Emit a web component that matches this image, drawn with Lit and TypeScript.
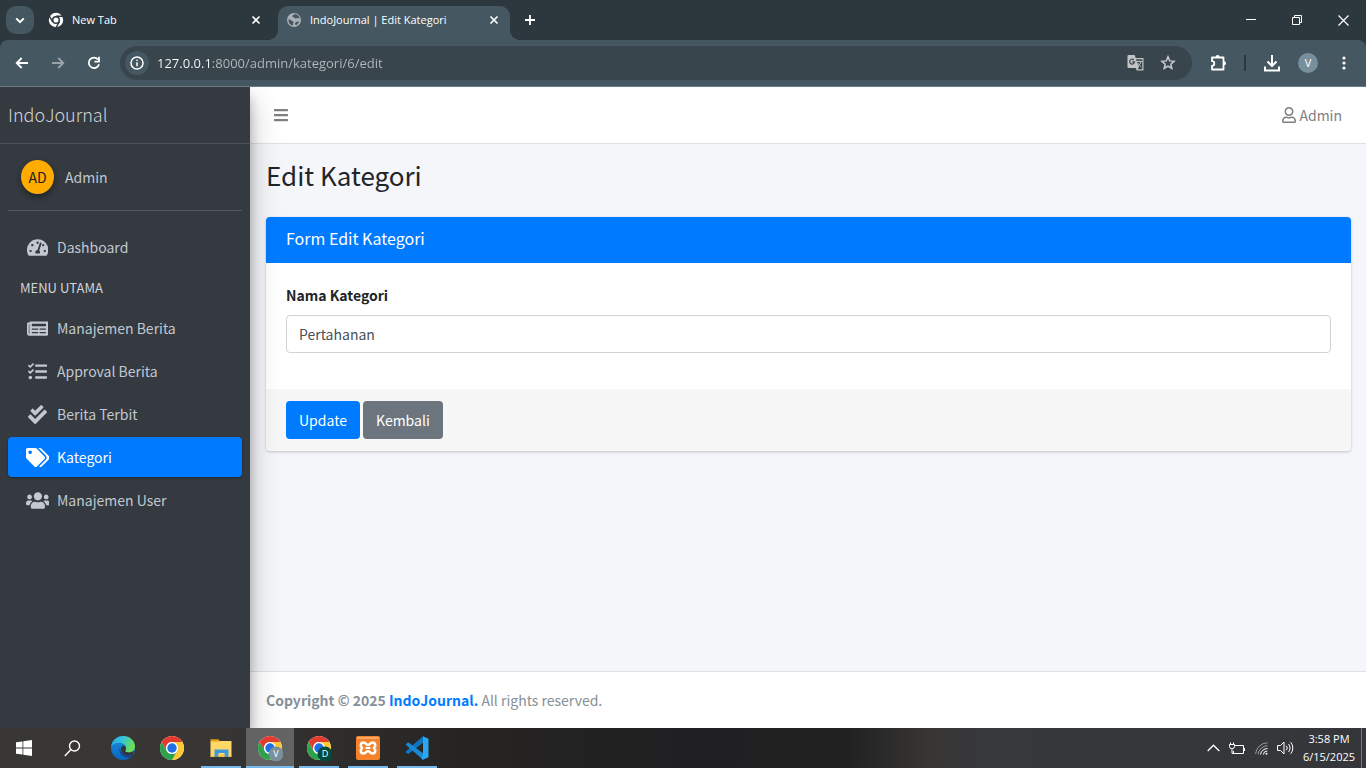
import { LitElement, html, svg, css } from "lit";
import { customElement } from "lit/decorators.js";
import { classMap } from "lit/directives/class-map.js";

const reset = css`
  * {
    box-sizing: border-box;
  }
  button {
    border: 0;
    padding: 0;
    margin: 0;
    background: none;
    color: inherit;
    font: inherit;
    cursor: pointer;
  }
  a {
    color: inherit;
    text-decoration: none;
  }
  svg {
    display: block;
    flex: none;
  }
`;

type Glyph = { w: number; d: string };

const glyphs: Record<string, Glyph> = {
  dashboard: {
    w: 576,
    d: "M288 32C128.94 32 0 160.94 0 320c0 52.8 14.25 102.26 39.06 144.8 5.61 9.62 16.3 15.2 27.44 15.2h443c11.14 0 21.83-5.58 27.44-15.2C561.75 422.26 576 372.8 576 320c0-159.06-128.94-288-288-288zm0 64c14.71 0 26.58 10.13 30.32 23.65-1.11 2.26-2.64 4.23-3.45 6.67l-9.22 27.67c-5.13 3.49-10.97 6.01-17.64 6.01-17.67 0-32-14.33-32-32S270.33 96 288 96zM96 384c-17.67 0-32-14.33-32-32s14.33-32 32-32 32 14.33 32 32-14.33 32-32 32zm48-160c-17.67 0-32-14.33-32-32s14.33-32 32-32 32 14.33 32 32-14.33 32-32 32zm246.77-72.41l-61.33 184C343.13 347.33 352 364.54 352 384c0 11.72-3.38 22.55-8.88 32H232.88c-5.5-9.45-8.88-20.28-8.88-32 0-33.94 26.5-61.43 59.9-63.59l61.34-184.01c4.17-12.56 17.73-19.45 30.36-15.17 12.57 4.19 19.35 17.79 15.17 30.36zm14.66 57.2l15.52-46.55c3.47-1.29 7.13-2.23 11.05-2.23 17.67 0 32 14.33 32 32s-14.33 32-32 32c-11.38-.01-20.89-6.28-26.57-15.22zM480 384c-17.67 0-32-14.33-32-32s14.33-32 32-32 32 14.33 32 32-14.33 32-32 32z",
  },
  news: {
    w: 576,
    d: "M552 64H88c-13.255 0-24 10.745-24 24v8H24c-13.255 0-24 10.745-24 24v272c0 30.928 25.072 56 56 56h472c26.51 0 48-21.49 48-48V88c0-13.255-10.745-24-24-24zM56 400a8 8 0 0 1-8-8V144h16v248a8 8 0 0 1-8 8zm236-16H140c-6.627 0-12-5.373-12-12v-8c0-6.627 5.373-12 12-12h152c6.627 0 12 5.373 12 12v8c0 6.627-5.373 12-12 12zm208 0H348c-6.627 0-12-5.373-12-12v-8c0-6.627 5.373-12 12-12h152c6.627 0 12 5.373 12 12v8c0 6.627-5.373 12-12 12zm-208-96H140c-6.627 0-12-5.373-12-12v-8c0-6.627 5.373-12 12-12h152c6.627 0 12 5.373 12 12v8c0 6.627-5.373 12-12 12zm208 0H348c-6.627 0-12-5.373-12-12v-8c0-6.627 5.373-12 12-12h152c6.627 0 12 5.373 12 12v8c0 6.627-5.373 12-12 12zm0-96H140c-6.627 0-12-5.373-12-12v-40c0-6.627 5.373-12 12-12h360c6.627 0 12 5.373 12 12v40c0 6.627-5.373 12-12 12z",
  },
  tasks: {
    w: 512,
    d: "M139.61 35.5a12 12 0 0 0-17 0L58.93 98.81l-22.7-22.12a12 12 0 0 0-17 0L3.53 92.41a12 12 0 0 0 0 17l47.59 47.4a12.78 12.78 0 0 0 17.61 0l15.59-15.62L156.52 69a12.09 12.09 0 0 0 .09-17zm0 159.19a12 12 0 0 0-17 0l-63.68 63.72-22.7-22.1a12 12 0 0 0-17 0L3.53 252a12 12 0 0 0 0 17L51 316.5a12.77 12.77 0 0 0 17.6 0l15.7-15.69 72.2-72.22a12 12 0 0 0 .09-16.9zM64 368c-26.49 0-48.59 21.5-48.59 48S37.53 464 64 464a48 48 0 0 0 0-96zm432 16H208a16 16 0 0 0-16 16v32a16 16 0 0 0 16 16h288a16 16 0 0 0 16-16v-32a16 16 0 0 0-16-16zm0-320H208a16 16 0 0 0-16 16v32a16 16 0 0 0 16 16h288a16 16 0 0 0 16-16V80a16 16 0 0 0-16-16zm0 160H208a16 16 0 0 0-16 16v32a16 16 0 0 0 16 16h288a16 16 0 0 0 16-16v-32a16 16 0 0 0-16-16z",
  },
  checks: {
    w: 512,
    d: "M505 174.8l-39.6-39.6c-9.4-9.4-24.6-9.4-33.9 0L192 374.7 80.6 263.2c-9.4-9.4-24.6-9.4-33.9 0L7 302.9c-9.4 9.4-9.4 24.6 0 34L175 505c9.4 9.4 24.6 9.4 33.9 0l296-296.2c9.4-9.5 9.4-24.7.1-34zm-324.3 106c6.2 6.3 16.4 6.3 22.6 0l208-208.2c6.2-6.3 6.2-16.4 0-22.6L366.1 4.7c-6.2-6.3-16.4-6.3-22.6 0L192 156.2l-55.4-55.5c-6.2-6.3-16.4-6.3-22.6 0L68.7 146c-6.2 6.3-6.2 16.4 0 22.6l112 112.2z",
  },
  tags: {
    w: 640,
    d: "M497.941 225.941L286.059 14.059A48 48 0 0 0 252.118 0H48C21.49 0 0 21.49 0 48v204.118a48 48 0 0 0 14.059 33.941l211.882 211.882c18.744 18.745 49.136 18.746 67.882 0l204.118-204.118c18.745-18.745 18.745-49.137 0-67.882zM112 160c-26.51 0-48-21.49-48-48s21.49-48 48-48 48 21.49 48 48-21.49 48-48 48zm513.941 133.823L421.823 497.941c-18.745 18.745-49.137 18.745-67.882 0l-.36-.36L527.64 323.522c16.999-16.999 26.36-39.6 26.36-63.64s-9.362-46.641-26.36-63.64L331.397 0h48.721a48 48 0 0 1 33.941 14.059l211.882 211.882c18.745 18.745 18.745 49.137 0 67.882z",
  },
  users: {
    w: 640,
    d: "M96 224c35.3 0 64-28.7 64-64s-28.7-64-64-64-64 28.7-64 64 28.7 64 64 64zm448 0c35.3 0 64-28.7 64-64s-28.7-64-64-64-64 28.7-64 64 28.7 64 64 64zm32 32h-64c-17.6 0-33.5 7.1-45.1 18.6 40.3 22.1 68.9 62 75.1 109.4h66c17.7 0 32-14.3 32-32v-32c0-35.3-28.7-64-64-64zm-256 0c61.9 0 112-50.1 112-112S381.9 32 320 32 208 82.1 208 144s50.1 112 112 112zm76.8 32h-8.3c-20.8 10-43.9 16-68.5 16s-47.6-6-68.5-16h-8.3C179.6 288 128 339.6 128 403.2V432c0 26.5 21.5 48 48 48h288c26.5 0 48-21.5 48-48v-28.8c0-63.6-51.6-115.2-115.2-115.2zm-223.7-13.4C161.5 263.1 145.6 256 128 256H64c-35.3 0-64 28.7-64 64v32c0 17.7 14.3 32 32 32h65.9c6.3-47.4 34.9-87.3 75.2-109.4z",
  },
  user: {
    w: 448,
    d: "M313.6 304c-28.7 0-42.5 16-89.6 16-47.1 0-60.8-16-89.6-16C60.2 304 0 364.2 0 438.4V464c0 26.5 21.5 48 48 48h352c26.5 0 48-21.5 48-48v-25.6c0-74.2-60.2-134.4-134.4-134.4zM400 464H48v-25.6c0-47.6 38.8-86.4 86.4-86.4 14.6 0 38.3 16 89.6 16 51.7 0 74.9-16 89.6-16 47.6 0 86.4 38.8 86.4 86.4V464zM224 288c79.5 0 144-64.5 144-144S303.5 0 224 0 80 64.5 80 144s64.5 144 144 144zm0-240c52.9 0 96 43.1 96 96s-43.1 96-96 96-96-43.1-96-96 43.1-96 96-96z",
  },
  bars: {
    w: 448,
    d: "M16 132h416c8.837 0 16-7.163 16-16V76c0-8.837-7.163-16-16-16H16C7.163 60 0 67.163 0 76v40c0 8.837 7.163 16 16 16zm0 160h416c8.837 0 16-7.163 16-16v-40c0-8.837-7.163-16-16-16H16c-8.837 0-16 7.163-16 16v40c0 8.837 7.163 16 16 16zm0 160h416c8.837 0 16-7.163 16-16v-40c0-8.837-7.163-16-16-16H16c-8.837 0-16 7.163-16 16v40c0 8.837 7.163 16 16 16z",
  },
};

const glyph = (name: string, size: number) => {
  const g = glyphs[name];
  return html`<svg
    width=${(g.w / 512) * size}
    height=${size}
    viewBox="0 0 ${g.w} 512"
    fill="currentColor"
    aria-hidden="true"
  >
    <path d=${g.d}></path>
  </svg>`;
};

const closeIcon = html`<svg width="10" height="10" viewBox="0 0 10 10" fill="none" stroke="currentColor" stroke-width="1.6">
  <path d="M1.5 1.5l7 7M8.5 1.5l-7 7"></path>
</svg>`;

const chromeLogo = svg`
  <circle cx="12" cy="12" r="12" fill="#fff"></circle>
  <path d="M12 6h10.4A12 12 0 0 1 12 24l5.2-9z" fill="#fcc934"></path>
  <path d="M1.6 6A12 12 0 0 0 12 24l5.2-9A6 6 0 0 1 6.8 15z" fill="#2da24c"></path>
  <path d="M1.6 6L6.8 15A6 6 0 0 1 12 6h10.4A12 12 0 0 0 1.6 6z" fill="#e33b2e"></path>
  <circle cx="12" cy="12" r="6" fill="#fff"></circle>
  <circle cx="12" cy="12" r="4.7" fill="#1f6fe5"></circle>
`;

@customElement("browser-frame")
class BrowserFrame extends LitElement {
  static styles = [
    reset,
    css`
      :host {
        display: block;
        font-family: "Open Sans", "Noto Sans", sans-serif;
        font-size: 11px;
        color: #fff;
        background: #2d383e;
        flex: none;
      }
      .tabs {
        display: flex;
        align-items: center;
        height: 40px;
        padding-left: 6px;
      }
      .search-tabs {
        width: 28px;
        height: 28px;
        border-radius: 10px;
        background: #455760;
        display: grid;
        place-items: center;
        flex: none;
      }
      .tab {
        display: flex;
        align-items: center;
        gap: 8px;
        height: 34px;
        align-self: flex-end;
        padding: 0 10px 6px 8px;
        line-height: 18px;
        white-space: nowrap;
      }
      .idle {
        width: 232px;
        margin-left: 6px;
      }
      .current {
        position: relative;
        width: 232px;
        margin-left: 6px;
        border-radius: 10px 10px 0 0;
        background: #455760;
      }
      .current::before,
      .current::after {
        content: "";
        position: absolute;
        bottom: 0;
        width: 10px;
        height: 10px;
      }
      .current::before {
        right: 100%;
        background: radial-gradient(circle at 0 0, transparent 10px, #455760 10px);
      }
      .current::after {
        left: 100%;
        background: radial-gradient(circle at 100% 0, transparent 10px, #455760 10px);
      }
      .label {
        flex: 1;
        overflow: hidden;
      }
      .close {
        width: 12px;
        height: 16px;
        display: grid;
        place-items: center;
      }
      .new-tab {
        width: 28px;
        height: 28px;
        margin-left: 6px;
        display: grid;
        place-items: center;
      }
      .window {
        margin-left: auto;
        display: flex;
      }
      .window button {
        width: 46px;
        height: 40px;
        display: grid;
        place-items: center;
      }
      .bar {
        display: flex;
        align-items: center;
        height: 46px;
        padding: 0 4px;
        background: #455760;
        border-radius: 8px 8px 0 0;
      }
      .bar button {
        width: 36px;
        height: 34px;
        display: grid;
        place-items: center;
        flex: none;
      }
      .bar .dim {
        opacity: 0.45;
      }
      .address {
        display: flex;
        align-items: center;
        flex: 1;
        height: 34px;
        margin: 0 8px;
        padding: 0 8px 0 5px;
        border-radius: 17px;
        background: #39454c;
        color: #c7cbce;
      }
      .address .info {
        width: 24px;
        height: 24px;
        border-radius: 12px;
        background: #455760;
        color: #fff;
      }
      .address .tool {
        width: 32px;
      }
      .address input {
        flex: 1;
        min-width: 0;
        height: 24px;
        margin-left: 8px;
        padding: 0;
        border: 0;
        outline: 0;
        font: 13px / 24px "Open Sans", "Noto Sans", sans-serif;
        color: transparent;
        background: linear-gradient(90deg, #fff 52px, #b4babd 52px);
        -webkit-background-clip: text;
        background-clip: text;
      }
      .rule {
        width: 2px;
        height: 16px;
        margin: 0 8px;
        background: #2d383e;
      }
      .bar .profile {
        width: 20px;
        height: 20px;
        margin: 0 8px;
        border-radius: 10px;
        background: #78909c;
        line-height: 20px;
      }
      .edge {
        height: 1px;
        background: #6b7b84;
      }
    `,
  ];

  render() {
    return html`
      <div class="tabs">
        <button class="search-tabs" aria-label="Search tabs">
          <svg width="10" height="7" viewBox="0 0 10 7" fill="none" stroke="currentColor" stroke-width="2">
            <path d="M1.2 1.4L5 5.2l3.8-3.8"></path>
          </svg>
        </button>
        <div class="tab idle">
          <svg width="16" height="16" viewBox="0 0 16 16">
            <circle cx="8" cy="8" r="7.2" fill="#fff"></circle>
            <circle cx="8" cy="8" r="3.3" fill="#fff" stroke="#2d383e" stroke-width="1.5"></circle>
            <path d="M8 4.2h7M4.7 9.9L1.3 4M11.3 9.9L7.9 15.8" stroke="#2d383e" stroke-width="1.4" fill="none"></path>
          </svg>
          <span class="label">New Tab</span>
          <button class="close" aria-label="Close New Tab">${closeIcon}</button>
        </div>
        <div class="tab current">
          <svg width="16" height="16" viewBox="0 0 16 16">
            <circle cx="8" cy="8" r="7" fill="#aab1b5"></circle>
            <path
              d="M2.6 7.2c1.6.2 2.5.6 3 1.5.4.7 1.5.4 1.8 1.3.3.9-.3 1.4-.2 2.3-.1.7-.4 1.1-.9 1.3A6 6 0 0 1 2.6 7.2zM8.400 2c-.2 1.2-1.4.9-1.9 1.7-.4.8.2 1.3 1 1.5 1 .2 1.1 1.3 2.3 1.4 1 .1 1.5-.7 2.6-.5.7.1 1.100.5 1.500.9A6 6 0 0 0 8.400 2zM9.500 10.500c.9-1 2.200-1.300 3.600-.9a5.600 5.600 0 0 1-3.100 3.600c-.9-.6-1.200-1.800-.5-2.700z"
              fill="#455760"
            ></path>
          </svg>
          <span class="label">IndoJournal | Edit Kategori</span>
          <button class="close" aria-label="Close IndoJournal">${closeIcon}</button>
        </div>
        <button class="new-tab" aria-label="New tab">
          <svg width="12" height="12" viewBox="0 0 12 12" stroke="currentColor" stroke-width="1.8">
            <path d="M6 1v10M1 6h10"></path>
          </svg>
        </button>
        <div class="window">
          <button aria-label="Minimize">
            <svg width="10" height="10" viewBox="0 0 10 10" stroke="currentColor"><path d="M0 4.5h10"></path></svg>
          </button>
          <button aria-label="Restore">
            <svg width="10" height="10" viewBox="0 0 10 10" fill="none" stroke="currentColor">
              <path d="M.5 2.5h7v7h-7zM2.5 2.5v-2h7v7h-2"></path>
            </svg>
          </button>
          <button aria-label="Close">
            <svg width="11" height="11" viewBox="0 0 11 11" fill="none" stroke="currentColor" stroke-width="1.2">
              <path d="M.5.5l10 10M10.5.5l-10 10"></path>
            </svg>
          </button>
        </div>
      </div>
      <div class="bar">
        <button aria-label="Back">
          <svg width="14" height="12" viewBox="0 0 14 12" fill="none" stroke="currentColor" stroke-width="1.8">
            <path d="M13 6H2M6.7 1L1.7 6l5 5"></path>
          </svg>
        </button>
        <button class="dim" aria-label="Forward">
          <svg width="14" height="12" viewBox="0 0 14 12" fill="none" stroke="currentColor" stroke-width="1.8">
            <path d="M1 6h11M7.3 1l5 5-5 5"></path>
          </svg>
        </button>
        <button aria-label="Reload">
          <svg width="14" height="14" viewBox="0 0 14 14" fill="none" stroke="currentColor" stroke-width="1.8">
            <path d="M12 8.2A5.2 5.2 0 1 1 11 3.5"></path>
            <path d="M12 .8v4.8H7.4"></path>
          </svg>
        </button>
        <div class="address">
          <button class="info" aria-label="View site information">
            <svg width="14" height="14" viewBox="0 0 14 14" fill="none" stroke="currentColor" stroke-width="1.5">
              <circle cx="7" cy="7" r="6"></circle>
              <path d="M7 6.3v3.9M7 3.7v1.4"></path>
            </svg>
          </button>
          <input type="text" aria-label="Address" value="127.0.0.1:8000/admin/kategori/6/edit" />
          <button class="tool" aria-label="Translate this page">
            <svg width="18" height="18" viewBox="0 0 18 18">
              <path d="M1.5 1h6.2l1 3H16.5v12.5H9.7L8.7 14H1.5A1 1 0 0 1 .5 13V2A1 1 0 0 1 1.5 1z" fill="#c0c4c7"></path>
              <path d="M9 5.2h6.3v10.1h-4.6L12 13z" fill="#39454c"></path>
              <path d="M6.8 5.9a2.4 2.4 0 1 0 .7 2H5.2" fill="none" stroke="#39454c" stroke-width="1.2"></path>
              <path d="M10 7.5h5M12.5 6.5v1M14 7.8c-.4 1.7-1.4 3-2.8 4M11.3 9.3c.6 1.4 1.6 2.5 3 3.4" fill="none" stroke="#c0c4c7"></path>
            </svg>
          </button>
          <button class="tool" aria-label="Bookmark this tab">
            <svg width="16" height="16" viewBox="0 0 16 16" fill="none" stroke="currentColor" stroke-width="1.5">
              <path d="M8 1.8l1.7 4.1 4.4.4-3.3 2.9 1 4.3L8 11.2l-3.8 2.3 1-4.3-3.3-2.9 4.4-.4z"></path>
            </svg>
          </button>
        </div>
        <button aria-label="Extensions">
          <svg width="18" height="18" viewBox="0 0 18 18">
            <path
              d="M3 3.5H14.5V15.5H3V11.8A2.3 2.3 0 0 0 3 7.2z"
              fill="none"
              stroke="currentColor"
              stroke-width="1.8"
              stroke-linejoin="round"
            ></path>
            <path d="M6.7 3a2 2 0 0 1 4 0zM15 7.3a2 2 0 0 1 0 4z" fill="currentColor"></path>
          </svg>
        </button>
        <span class="rule"></span>
        <button aria-label="Downloads">
          <svg width="16" height="17" viewBox="0 0 16 17" fill="none" stroke="currentColor" stroke-width="2">
            <path d="M8 0v10.500M3.500 6.500L8 11l4.500-4.500M1 11.500v4h14v-4"></path>
          </svg>
        </button>
        <button class="profile" aria-label="Profile">V</button>
        <button aria-label="Menu">
          <svg width="4" height="14" viewBox="0 0 4 14" fill="currentColor">
            <circle cx="2" cy="2" r="1.6"></circle>
            <circle cx="2" cy="7" r="1.6"></circle>
            <circle cx="2" cy="12" r="1.6"></circle>
          </svg>
        </button>
      </div>
      <div class="edge"></div>
    `;
  }
}

@customElement("side-menu")
class SideMenu extends LitElement {
  static styles = [
    reset,
    css`
      :host {
        display: flex;
        flex-direction: column;
        flex: none;
        width: 250px;
        background: #343a40;
        color: #c2c7d0;
        position: relative;
        z-index: 1;
        box-shadow:
          0 14px 28px rgba(0, 0, 0, 0.25),
          0 10px 10px rgba(0, 0, 0, 0.22);
      }
      .brand {
        height: 57px;
        padding: 0 8px;
        border-bottom: 1px solid #4b545c;
        font-size: 18px;
        font-weight: 300;
        line-height: 54px;
        color: #d0d3d6;
      }
      .content {
        padding: 0 8px;
      }
      .panel {
        display: flex;
        align-items: center;
        gap: 11px;
        padding: 16px 0 16px 13px;
        margin-bottom: 16px;
        border-bottom: 1px solid #4f5962;
      }
      .avatar {
        width: 33px;
        height: 34px;
        border-radius: 50%;
        background: #ffab00;
        color: #1d1d1d;
        line-height: 34px;
        text-align: center;
        box-shadow:
          0 3px 6px rgba(0, 0, 0, 0.16),
          0 3px 6px rgba(0, 0, 0, 0.23);
      }
      .nav {
        display: flex;
        flex-direction: column;
        gap: 3px;
      }
      .item {
        display: flex;
        align-items: center;
        height: 40px;
        padding: 0 16px;
        border-radius: 4px;
        line-height: 24px;
      }
      .on {
        background: #007bff;
        color: #fff;
        box-shadow:
          0 1px 3px rgba(0, 0, 0, 0.12),
          0 1px 2px rgba(0, 0, 0, 0.24);
      }
      .icon {
        width: 27px;
        margin-right: 6px;
        display: grid;
        place-items: center;
      }
      .heading {
        padding: 8px 12px 7px;
        font-size: 13px;
        line-height: 20px;
        color: #d0d4db;
      }
    `,
  ];

  private item(icon: string, label: string, on = false) {
    return html`<a class=${classMap({ item: true, on })} href="#">
      <span class="icon">${glyph(icon, 19)}</span>${label}
    </a>`;
  }

  render() {
    return html`
      <a class="brand" href="#">IndoJournal</a>
      <div class="content">
        <div class="panel">
          <span class="avatar">AD</span>
          <a href="#">Admin</a>
        </div>
        <nav class="nav">
          ${this.item("dashboard", "Dashboard")}
          <div class="heading">MENU UTAMA</div>
          ${this.item("news", "Manajemen Berita")} ${this.item("tasks", "Approval Berita")}
          ${this.item("checks", "Berita Terbit")} ${this.item("tags", "Kategori", true)}
          ${this.item("users", "Manajemen User")}
        </nav>
      </div>
    `;
  }
}

@customElement("edit-page")
class EditPage extends LitElement {
  static styles = [
    reset,
    css`
      :host {
        display: flex;
        flex-direction: column;
        flex: 1;
        min-width: 0;
        background: #f4f6f9;
        color: #212529;
      }
      .topbar {
        display: flex;
        align-items: center;
        justify-content: space-between;
        height: 57px;
        padding: 0 24px;
        background: #fff;
        border-bottom: 1px solid #dee2e6;
        color: #7f8081;
      }
      .account {
        display: flex;
        align-items: center;
        gap: 3px;
        line-height: 24px;
      }
      .main {
        flex: 1;
        padding: 13px 15px 15px 16px;
      }
      .title {
        margin: 0 0 25px;
        font-size: 26px;
        font-weight: 400;
        line-height: 35px;
      }
      .card {
        border-radius: 4px;
        background: #fff;
        overflow: hidden;
        box-shadow:
          0 0 1px rgba(0, 0, 0, 0.13),
          0 1px 3px rgba(0, 0, 0, 0.2);
      }
      .card-title {
        margin: 0;
        padding: 9px 20px 13px;
        background: #007bff;
        color: #fff;
        font-size: 16px;
        font-weight: 400;
        line-height: 24px;
      }
      .body {
        padding: 20px 20px 36px;
      }
      .body label {
        display: block;
        margin-bottom: 8px;
        font-weight: 700;
        line-height: 24px;
      }
      .body input {
        display: block;
        width: 100%;
        height: 38px;
        padding: 0 12px;
        border: 1px solid #ced4da;
        border-radius: 4px;
        background: #fff;
        color: #495057;
        font: inherit;
        line-height: 24px;
      }
      .actions {
        display: flex;
        gap: 3px;
        padding: 12px 20px;
        background: #f7f7f7;
      }
      .btn {
        height: 38px;
        padding: 0 13px;
        border-radius: 4px;
        color: #fff;
        line-height: 38px;
      }
      .primary {
        background: #007bff;
      }
      .secondary {
        background: #6c757d;
      }
      .footer {
        padding: 16px;
        border-top: 1px solid #dee2e6;
        background: #fff;
        color: #869099;
        line-height: 24px;
      }
      .footer a {
        color: #007bff;
      }
    `,
  ];

  render() {
    return html`
      <header class="topbar">
        <button aria-label="Toggle menu">${glyph("bars", 16)}</button>
        <a class="account" href="#">${glyph("user", 16)}Admin</a>
      </header>
      <main class="main">
        <h1 class="title">Edit Kategori</h1>
        <form class="card">
          <h2 class="card-title">Form Edit Kategori</h2>
          <div class="body">
            <label for="name">Nama Kategori</label>
            <input id="name" type="text" value="Pertahanan" />
          </div>
          <div class="actions">
            <button type="button" class="btn primary">Update</button>
            <a class="btn secondary" href="#">Kembali</a>
          </div>
        </form>
      </main>
      <footer class="footer">
        <strong>Copyright © 2025 <a href="#">IndoJournal.</a></strong> All rights reserved.
      </footer>
    `;
  }
}

@customElement("task-bar")
class TaskBar extends LitElement {
  static styles = [
    reset,
    css`
      :host {
        display: flex;
        flex: none;
        height: 40px;
        color: #fff;
        background: linear-gradient(
          90deg,
          #393734 0%,
          #383634 16%,
          #262422 34%,
          #202022 50%,
          #212122 62%,
          #373634 68%,
          #37383c 72%,
          #35363a 100%
        );
        font-family: "Open Sans", "Noto Sans", sans-serif;
        font-size: 11px;
      }
      .apps {
        display: flex;
        gap: 1px;
        margin-left: 3px;
      }
      .app {
        width: 48px;
        height: 40px;
        display: grid;
        place-items: center;
        flex: none;
      }
      .open {
        background: linear-gradient(#76b9ed, #76b9ed) center bottom / 40px 2px no-repeat;
      }
      .active {
        background:
          linear-gradient(#76b9ed, #76b9ed) center bottom / 48px 2px no-repeat,
          #636363;
      }
      .tray {
        display: flex;
        align-items: center;
        margin-left: auto;
      }
      .tray button {
        width: 24px;
        height: 40px;
        display: grid;
        place-items: center;
      }
      .tray .clock {
        width: 64px;
        line-height: 18px;
        place-content: center;
      }
      .desktop {
        width: 5px;
        height: 40px;
        border-left: 1px solid #77787b;
      }
    `,
  ];

  private badge(letter: string, fill: string) {
    return svg`<circle cx="18" cy="18" r="7.5" fill=${fill}></circle>
      <text x="18" y="21" text-anchor="middle" font-size="9" fill="#fff">${letter}</text>`;
  }

  private app(label: string, state: string, art: unknown) {
    return html`<button class="app ${state}" aria-label=${label}>
      <svg width="26" height="26" viewBox="-1 -1 26 26">${art}</svg>
    </button>`;
  }

  render() {
    return html`
      <button class="app" aria-label="Start">
        <svg width="16" height="16" viewBox="0 0 16 16" fill="currentColor">
          <path d="M0 2.3l6.5-.9v6.2H0zM7.3 1.300L16 0v7.600H7.300zM0 8.400h6.500v6.200L0 13.700zM7.300 8.400H16V16l-8.700-1.300z"></path>
        </svg>
      </button>
      <button class="app" aria-label="Search">
        <svg width="17" height="17" viewBox="0 0 17 17" fill="none" stroke="currentColor" stroke-width="1.4">
          <circle cx="10.5" cy="6" r="5"></circle>
          <path d="M7 9.600L.8 16"></path>
        </svg>
      </button>
      <div class="apps">
        ${this.app(
          "Edge",
          "",
          svg`<defs>
              <linearGradient id="g" x1="0" y1="0" x2="1" y2=".3"><stop offset="0" stop-color="#2ba4e0"></stop><stop offset=".5" stop-color="#35c4dc"></stop><stop offset="1" stop-color="#6cdf50"></stop></linearGradient>
              <linearGradient id="b" x1="0" y1="0" x2="0" y2="1"><stop offset="0" stop-color="#1b8fdd"></stop><stop offset="1" stop-color="#0a65c0"></stop></linearGradient>
            </defs>
            <circle cx="12" cy="12" r="12" fill="url(#b)"></circle>
            <path d="M.2 10.500C1 4.500 6 0 12 0c7 0 12 5 12 10.500 0 4-3 6-6.200 6-2.600 0-4-1-3.600-2 .6-1 .9-1.700.9-2.600 0-2.800-2.900-5.100-6.700-5.100C4.400 6.800 1.300 8.400.2 10.500z" fill="url(#g)"></path>
            <path d="M8.600 11.500c-1.500 5.500 3 10.500 9.400 10.400 1.200 0 2.800-.6 4.200-3.600.2-.5-.2-.8-.6-.5-6.300 3-12.500-.4-13-6.300z" fill="#14488f"></path>
            <path d="M14.200 14.500c-.4 1 1 2 3.600 2 2 0 3.800-.7 5-2.100l-.9 3.500c-5 2.600-10 1.100-11.700-3.100-.8-2 .1-4.300 1.900-5.300 1.700.3 3 1.500 3 2.900 0 .8-.4 1.300-.9 2.100z" fill="#353433"></path>`,
        )}
        ${this.app("Chrome", "", chromeLogo)}
        ${this.app(
          "File Explorer",
          "open",
          svg`<path d="M1.500 5H22.500V20.500H1.500z" fill="#ffd766"></path>
            <path d="M1.500 3.200h8.200l1 2.300H1.500z" fill="#e3a21a"></path>
            <path d="M5.500 13.500h14V21h-4v-4h-6v4h-4z" fill="#3d9bdc"></path>
            <path d="M1.500 19.500h4V21h-4zM9.500 18.500h6V21h-6zM19.500 19.500h3V21h-3z" fill="#f5c542"></path>`,
        )}
        ${this.app("Chrome, profile V", "active", svg`${chromeLogo}${this.badge("V", "#78909c")}`)}
        ${this.app("Chrome, profile D", "open", svg`${chromeLogo}${this.badge("D", "#004d40")}`)}
        ${this.app(
          "XAMPP",
          "open",
          svg`<rect width="24" height="24" rx="2" fill="#f5822a"></rect>
            <path d="M1 1h22v2H1z" fill="#f9a866"></path>
            <path d="M7.500 6.500c-3 0-3.500 3.500-1.600 5.500-2 2-1.400 5.500 1.600 5.500 2.600 0 2.500-2.500 4.500-2.500s1.900 2.500 4.500 2.500c3 0 3.600-3.500 1.600-5.500 1.900-2 1.400-5.500-1.600-5.500-2.600 0-2.500 2.500-4.500 2.500S10.100 6.500 7.500 6.500z" fill="none" stroke="#fff" stroke-width="2.6"></path>
            <path d="M9.500 12h5" stroke="#fff" stroke-width="2"></path>`,
        )}
        ${this.app(
          "Visual Studio Code",
          "open",
          svg`<path d="M18 .3v6.500L3.500 18 1 16.800.6 15.500z" fill="#0e74c0"></path>
            <path d="M.6 8.500L3.200 6.300 18 17.200v6.500z" fill="#178ad6"></path>
            <path d="M18 .2l5.500 2.500v18.600L18 23.800l-1.500-1L18 18z" fill="#2aa7f2"></path>`,
        )}
      </div>
      <div class="tray">
        <button aria-label="Show hidden icons">
          <svg width="13" height="8" viewBox="0 0 13 8" fill="none" stroke="currentColor" stroke-width="1.3"><path d="M.7 7l5.800-5.800L12.300 7"></path></svg>
        </button>
        <button aria-label="Battery">
          <svg width="16" height="13" viewBox="0 0 16 13" fill="none" stroke="currentColor">
            <path d="M6 3.500h8.500v8H4.500V9M15.500 6v3M1.500.5v2M4.500.5v2M.5 2.500h5v2a2 2 0 0 1-2 2h-1a2 2 0 0 1-2-2zM3 6.500v5h2"></path>
          </svg>
        </button>
        <button aria-label="Network">
          <svg width="13" height="13" viewBox="0 0 13 13" fill="none" stroke="currentColor">
            <path d="M.6 12A12 12 0 0 1 12.500.8M3 12.500A10 10 0 0 1 12.500 3.600" opacity=".5"></path>
            <path d="M5.500 12.500a7 7 0 0 1 7-6M8.300 12.500a4 4 0 0 1 4-3.500"></path>
            <circle cx="11.500" cy="11.800" r="1" fill="currentColor" stroke="none"></circle>
          </svg>
        </button>
        <button aria-label="Volume">
          <svg width="17" height="14" viewBox="0 0 17 14" fill="none" stroke="currentColor">
            <path d="M.5 4.500h3l3.500-3.500v12L3.500 9.500h-3zM9.300 4.800a3.200 3.200 0 0 1 0 4.400M11.500 3a6 6 0 0 1 0 8M13.700 1.200a9 9 0 0 1 0 11.600"></path>
          </svg>
        </button>
        <button class="clock"><span>3:58 PM</span><span>6/15/2025</span></button>
        <span class="desktop"></span>
      </div>
    `;
  }
}

@customElement("app-root")
class AppRoot extends LitElement {
  static styles = css`
    :host {
      display: flex;
      flex-direction: column;
      min-height: 100vh;
    }
    .page {
      display: flex;
      flex: 1;
      overflow: hidden;
      font: 14px / 24px "Noto Sans CJK SC", "Noto Sans", sans-serif;
    }
  `;

  render() {
    return html`
      <browser-frame></browser-frame>
      <div class="page">
        <side-menu></side-menu>
        <edit-page></edit-page>
      </div>
      <task-bar></task-bar>
    `;
  }
}
